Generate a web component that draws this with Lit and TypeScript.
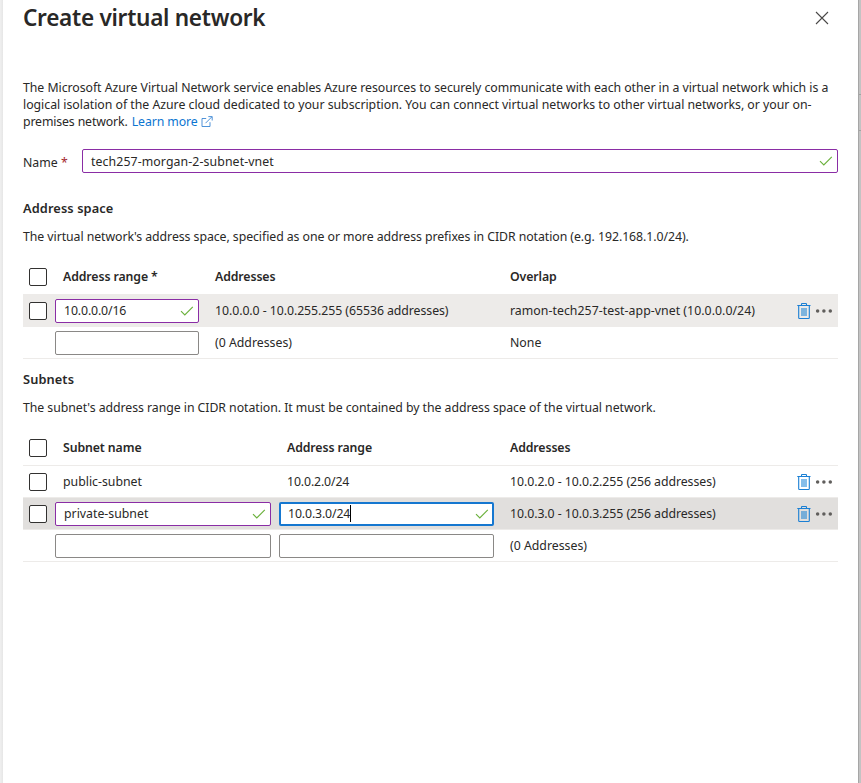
import { LitElement, html, css, svg, nothing } from "lit";
import { customElement } from "lit/decorators.js";

const check = html`<svg class="check" width="14" height="12" viewBox="0 0 14 12">
  <path d="M1 6.2 L4.8 9.9 L12.8 1.8" fill="none" stroke="#6bb13c" stroke-width="1.15" />
</svg>`;

const trash = html`<svg class="trash" width="14" height="17" viewBox="0 0 14 17">
  <path d="M4 5h6v8H4z" fill="#0078d4" fill-opacity=".48" />
  <path d="M.3 2.5h13.2M4.5 2.4V1.2q0-.7.7-.7h3.6q.7 0 .7.7v1.2M1.7 2.6v12.1q0 .8.8.8h9q.8 0 .8-.8V2.6" fill="none" stroke="#1a7fd4" stroke-width="1.1" />
</svg>`;

const dots = html`<svg class="dots" width="18" height="6" viewBox="0 0 18 6">
  ${[2.6, 8.9, 15.3].map((x) => svg`<circle cx=${x} cy="3" r="1.75" fill="#605e5c" />`)}
</svg>`;

const box = html`<span class="box" role="checkbox"></span>`;

const field = (value = "", focused = false) => html`
  <div class="field ${focused ? "focused" : value ? "edited" : ""}">
    <span class="value ${value.includes("/") ? "cidr" : ""}">${value}</span>${focused ? html`<i class="caret"></i>` : nothing}
    ${value ? check : nothing}
  </div>`;

@customElement("app-root")
export class AppRoot extends LitElement {
  static styles = css`
    :host {
      display: block;
      box-sizing: border-box;
      height: 783px;
      padding: 0 3px;
      background:
        linear-gradient(#a2a2a2, #a2a2a2) right 94px / 2px 1px no-repeat,
        linear-gradient(#a2a2a2, #a2a2a2) right 130px / 2px 1px no-repeat,
        linear-gradient(90deg, #f0f0f0 0, #e6e6e6 3px, #c3c3c3 3px);
      font: 12.3px/17px "Noto Sans", sans-serif;
      color: #292827;
      overflow: hidden;
    }
    * { box-sizing: border-box; }
    svg { display: block; flex: none; }
    .panel {
      height: 783px;
      padding: 0 20px;
      background: #fff;
      border-right: 1px solid #a6a6a6;
      width: 856px;
    }
    header { display: flex; justify-content: space-between; height: 79px; }
    h1 { margin: 3px 0 0; font-size: 22.6px; line-height: 30px; font-weight: 600; letter-spacing: -0.29px; }
    .close { margin: 11px 9px 0 0; }
    p { margin: 0; white-space: nowrap; }
    .l1 { letter-spacing: -0.045px; }
    .l2 { letter-spacing: -0.022px; }
    .l3 { letter-spacing: -0.14px; }
    .l4 { letter-spacing: -0.06px; }
    .l5 { letter-spacing: -0.05px; }
    .link { color: #0b75d1; margin-left: 1px; letter-spacing: -0.11px; }
    .ext { display: inline-block; vertical-align: -1px; margin-left: 0; }
    .name { display: flex; align-items: center; height: 24px; margin-top: 19px; }
    .name label { width: 59px; flex: none; padding-top: 2px; }
    .name .value { letter-spacing: 0.1px; }
    .req { color: #a4262c; }
    .field {
      display: flex;
      align-items: center;
      flex: 1;
      height: 24px;
      padding: 0 4px 0 8px;
      border: 1px solid #8a8886;
      border-radius: 2px;
      background: #fff;
    }
    .edited { border-color: #8a2da5; }
    .focused { border: 2px solid #1577d0; padding: 0 3px 0 7px; }
    .caret { width: 1px; height: 17px; background: #000; }
    .check { margin-left: auto; }
    .cidr { letter-spacing: -0.13px; }
    h2 { margin: 0; font-size: 12.8px; line-height: 18px; font-weight: 600; letter-spacing: 0.1px; }
    .address { margin-top: 26px; }
    .subnets { margin-top: 11px; }
    .desc { margin-top: 11px; }
    .table { margin-top: 15px; }
    .row {
      display: grid;
      grid-template-columns: 32px 152px 303px 279px 1fr;
      align-items: center;
      height: 32px;
      border-bottom: 1px solid #edebe9;
    }
    .subnet-row { grid-template-columns: 32px 224px 231px 279px 1fr; }
    .head { height: 35px; font-weight: 600; letter-spacing: -0.1px; }
    .head .label { padding-bottom: 2px; }
    .hover { background: #edebe9; }
    .selected { background: #e1dfdd; }
    .box {
      width: 18px;
      height: 18px;
      margin-left: 6px;
      border: 1px solid #323130;
      border-radius: 2px;
      background: #fff;
    }
    .pad { padding-left: 8px; }
    .cell { white-space: nowrap; }
    .range { letter-spacing: -0.06px; }
    .vnet { letter-spacing: 0.04px; }
    .row .field { margin-right: 8px; }
    .subnet-row .field + .field { margin-right: 16px; }
    .actions { display: flex; align-items: center; gap: 4px; padding-left: 8px; }
    .trash { margin-top: 1px; }
  `;

  private actions = html`<div class="actions">${trash}${dots}</div>`;

  render() {
    return html`
      <main class="panel">
        <header>
          <h1>Create virtual network</h1>
          <svg class="close" width="14" height="14" viewBox="0 0 14 14">
            <path d="M1 1l12 12M13 1L1 13" stroke="#494847" stroke-width="1.1" />
          </svg>
        </header>
        <p><span class="l1">The Microsoft Azure Virtual Network service enables Azure resources to securely communicate with each other in a virtual network which is a</span><br /><span class="l2">logical isolation of the Azure cloud dedicated to your subscription. You can connect virtual networks to other virtual networks, or your on-</span><br /><span class="l3">premises network.</span> <span class="link">Learn more</span>
          <svg class="ext" width="12" height="11" viewBox="0 0 12 11">
            <path d="M5.2 2.5H1v8h8V6.2M4.5 7.2L10.8.9M7.3.6h3.9v3.9" fill="none" stroke="#3c87d4" stroke-width=".9" />
          </svg>
        </p>
        <div class="name"><label>Name <span class="req">*</span></label>${field("tech257-morgan-2-subnet-vnet")}</div>

        <section class="address">
          <h2>Address space</h2>
          <p class="desc"><span class="l4">The virtual network's address space, specified as one or more address prefixes in CIDR notation (e.g. 192.168.1.0/24).</span></p>
          <div class="table">
            <div class="row head">${box}<span class="label pad">Address range *</span><span class="label pad">Addresses</span><span class="label">Overlap</span></div>
            <div class="row hover">${box}${field("10.0.0.0/16")}<span class="cell pad range">10.0.0.0 - 10.0.255.255 (65536 addresses)</span><span class="cell vnet">ramon-tech257-test-app-vnet (10.0.0.0/24)</span>${this.actions}</div>
            <div class="row"><span></span>${field()}<span class="cell pad">(0 Addresses)</span><span class="cell">None</span></div>
          </div>
        </section>

        <section class="subnets">
          <h2>Subnets</h2>
          <p class="desc"><span class="l5">The subnet's address range in CIDR notation. It must be contained by the address space of the virtual network.</span></p>
          <div class="table">
            <div class="row subnet-row head">${box}<span class="label pad">Subnet name</span><span class="label pad">Address range</span><span class="label">Addresses</span></div>
            <div class="row subnet-row">${box}<span class="cell pad">public-subnet</span><span class="cell pad cidr">10.0.2.0/24</span><span class="cell range">10.0.2.0 - 10.0.2.255 (256 addresses)</span>${this.actions}</div>
            <div class="row subnet-row selected">${box}${field("private-subnet")}${field("10.0.3.0/24", true)}<span class="cell range">10.0.3.0 - 10.0.3.255 (256 addresses)</span>${this.actions}</div>
            <div class="row subnet-row"><span></span>${field()}${field()}<span class="cell">(0 Addresses)</span></div>
          </div>
        </section>
      </main>
    `;
  }
}
